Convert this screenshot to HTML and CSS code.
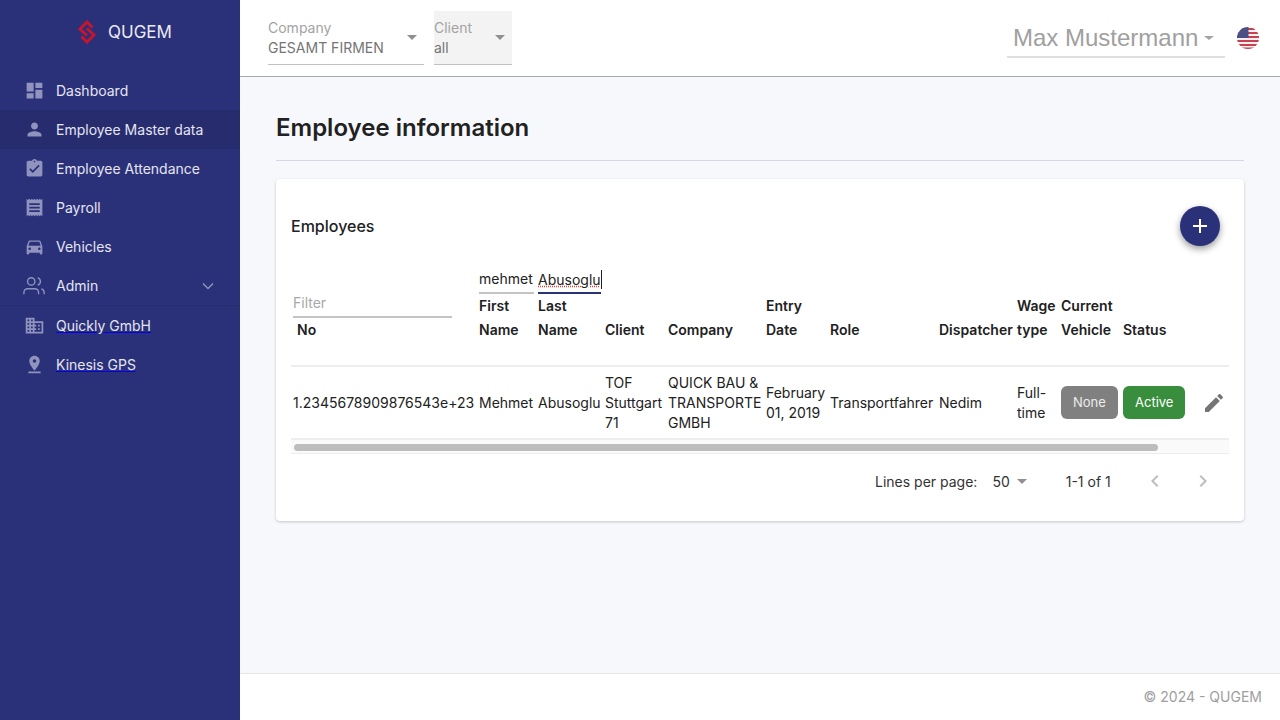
FILE: index.html
```html
<!DOCTYPE html>
<html>
<head lang="en">
    <meta charset="UTF-8">
    <title>Employee information</title>
    <link rel="stylesheet" href="styles.css">
</head>
<body>

<div class="app">
    <aside class="sidebar">
        <div class="brand">
            <svg class="brand-logo" viewBox="0 0 18 24" width="18" height="24">
                <path d="M14.5 7.5L9 2 2 9l7 6.5"/>
                <path d="M3.5 16.5L9 22l7-7-7-6.5"/>
            </svg>
            <span>QUGEM</span>
        </div>
        <nav class="nav">
            <div class="nav-item">
                <svg class="nav-icon" viewBox="0 0 24 24"><path d="M3 13h8V3H3v10zm0 8h8v-6H3v6zm10 0h8V11h-8v10zm0-18v6h8V3h-8z"/></svg>
                <span>Dashboard</span>
            </div>
            <div class="nav-item current">
                <svg class="nav-icon" viewBox="0 0 24 24"><path d="M12 12c2.21 0 4-1.79 4-4s-1.79-4-4-4-4 1.79-4 4 1.79 4 4 4zm0 2c-2.67 0-8 1.34-8 4v2h16v-2c0-2.66-5.33-4-8-4z"/></svg>
                <span>Employee Master data</span>
            </div>
            <div class="nav-item">
                <svg class="nav-icon" viewBox="0 0 24 24"><path d="M19 3h-4.18C14.4 1.84 13.3 1 12 1c-1.3 0-2.4.84-2.82 2H5c-1.1 0-2 .9-2 2v14c0 1.1.9 2 2 2h14c1.1 0 2-.9 2-2V5c0-1.1-.9-2-2-2zm-7 0c.55 0 1 .45 1 1s-.45 1-1 1-1-.45-1-1 .45-1 1-1zm-2 14l-4-4 1.41-1.41L10 14.17l6.59-6.59L18 9l-8 8z"/></svg>
                <span>Employee Attendance</span>
            </div>
            <div class="nav-item">
                <svg class="nav-icon" viewBox="0 0 24 24"><path d="M18 17H6v-2h12v2zm0-4H6v-2h12v2zm0-4H6V7h12v2zM3 22l1.5-1.5L6 22l1.5-1.5L9 22l1.5-1.5L12 22l1.5-1.5L15 22l1.5-1.5L18 22l1.5-1.5L21 22V2l-1.5 1.5L18 2l-1.5 1.5L15 2l-1.5 1.5L12 2l-1.5 1.5L9 2 7.5 3.5 6 2 4.5 3.5 3 2v20z"/></svg>
                <span>Payroll</span>
            </div>
            <div class="nav-item">
                <svg class="nav-icon" viewBox="0 0 24 24"><path d="M18.92 6.01C18.72 5.42 18.16 5 17.5 5h-11c-.66 0-1.21.42-1.42 1.01L3 12v8c0 .55.45 1 1 1h1c.55 0 1-.45 1-1v-1h12v1c0 .55.45 1 1 1h1c.55 0 1-.45 1-1v-8l-2.08-5.99zM6.5 16c-.83 0-1.5-.67-1.5-1.5S5.67 13 6.5 13s1.5.67 1.5 1.5S7.33 16 6.5 16zm11 0c-.83 0-1.5-.67-1.5-1.5s.67-1.5 1.5-1.5 1.5.67 1.5 1.5-.67 1.5-1.5 1.5zM5 11l1.5-4.5h11L19 11H5z"/></svg>
                <span>Vehicles</span>
            </div>
            <div class="nav-item admin">
                <svg class="nav-icon line" viewBox="0 0 24 24"><path d="M17 21v-2a4 4 0 0 0-4-4H5a4 4 0 0 0-4 4v2"/><circle cx="9" cy="7" r="4"/><path d="M23 21v-2a4 4 0 0 0-3-3.87"/><path d="M16 3.13a4 4 0 0 1 0 7.75"/></svg>
                <span>Admin</span>
                <svg class="nav-chevron" viewBox="0 0 12 8" width="12" height="8"><path d="M1 1.5l5 5 5-5"/></svg>
            </div>
            <a class="nav-item nav-link" href="#">
                <svg class="nav-icon" viewBox="0 0 24 24"><path d="M12 7V3H2v18h20V7H12zM6 19H4v-2h2v2zm0-4H4v-2h2v2zm0-4H4V9h2v2zm0-4H4V5h2v2zm4 12H8v-2h2v2zm0-4H8v-2h2v2zm0-4H8V9h2v2zm0-4H8V5h2v2zm10 12h-8v-2h2v-2h-2v-2h2v-2h-2V9h8v10zm-2-8h-2v2h2v-2zm0 4h-2v2h2v-2z"/></svg>
                <span>Quickly GmbH</span>
            </a>
            <a class="nav-item nav-link" href="#">
                <svg class="nav-icon" viewBox="0 0 24 24"><path d="M18 8c0-3.31-2.69-6-6-6S6 4.69 6 8c0 4.5 6 11 6 11s6-6.5 6-11zm-8 0c0-1.1.9-2 2-2s2 .9 2 2-.89 2-2 2c-1.1 0-2-.9-2-2zM5 20v2h14v-2H5z"/></svg>
                <span>Kinesis GPS</span>
            </a>
        </nav>
    </aside>

    <div class="main">
        <header class="topbar">
            <div class="select select-company">
                <div class="select-label">Company</div>
                <div class="select-value">GESAMT FIRMEN</div>
                <i class="caret"></i>
            </div>
            <div class="select select-client">
                <div class="select-label">Client</div>
                <div class="select-value">all</div>
                <i class="caret"></i>
            </div>
            <div class="user">
                <span>Max Mustermann</span>
                <i class="caret small"></i>
            </div>
            <svg class="flag" viewBox="0 0 22 22" width="22" height="22">
                <defs><clipPath id="round"><circle cx="11" cy="11" r="11"/></clipPath></defs>
                <g clip-path="url(#round)">
                    <rect width="22" height="22" fill="#f2f0f0"/>
                    <rect y="1" width="22" height="2" fill="#c9404f"/>
                    <rect y="5" width="22" height="2" fill="#c9404f"/>
                    <rect y="9" width="22" height="2" fill="#c9404f"/>
                    <rect y="13" width="22" height="2" fill="#c9404f"/>
                    <rect y="17" width="22" height="2" fill="#c9404f"/>
                    <rect y="20.5" width="22" height="2" fill="#c9404f"/>
                    <rect width="11.5" height="11" fill="#4a4f86"/>
                </g>
            </svg>
        </header>

        <main class="content">
            <h1 class="page-title">Employee information</h1>
            <section class="card">
                <div class="card-head">
                    <h2>Employees</h2>
                    <button class="fab" type="button">
                        <svg viewBox="0 0 24 24" width="24" height="24"><path d="M19 13h-6v6h-2v-6H5v-2h6V5h2v6h6v2z"/></svg>
                    </button>
                </div>
                <div class="table-wrap">
                    <table class="grid">
                        <colgroup>
                            <col class="c-no"><col class="c-first"><col class="c-last"><col class="c-client">
                            <col class="c-company"><col class="c-date"><col class="c-role"><col class="c-disp">
                            <col class="c-wage"><col class="c-vehicle"><col class="c-status"><col class="c-edit">
                        </colgroup>
                        <thead>
                            <tr>
                                <th class="no-head">
                                    <input class="filter" type="text" placeholder="Filter">
                                    <div class="no-title">No</div>
                                </th>
                                <th>
                                    <input class="filter short" type="text" value="mehmet">
                                    <div>First<br>Name</div>
                                </th>
                                <th>
                                    <div class="filter short focused"><span class="typed">Abusoglu</span></div>
                                    <div>Last<br>Name</div>
                                </th>
                                <th>Client</th>
                                <th>Company</th>
                                <th>Entry<br>Date</th>
                                <th>Role</th>
                                <th>Dispatcher</th>
                                <th>Wage<br>type</th>
                                <th>Current<br>Vehicle</th>
                                <th>Status</th>
                                <th></th>
                            </tr>
                        </thead>
                        <tbody>
                            <tr>
                                <td class="num">1.2345678909876543e+23</td>
                                <td>Mehmet</td>
                                <td>Abusoglu</td>
                                <td>TOF Stuttgart 71</td>
                                <td>QUICK BAU &amp; TRANSPORTE GMBH</td>
                                <td>February 01, 2019</td>
                                <td>Transportfahrer</td>
                                <td>Nedim</td>
                                <td>Full-time</td>
                                <td><span class="chip chip-grey">None</span></td>
                                <td><span class="chip chip-green">Active</span></td>
                                <td class="edit">
                                    <svg viewBox="0 0 24 24" width="24" height="24"><path d="M3 17.25V21h3.75L17.81 9.94l-3.75-3.75L3 17.25zM20.71 7.04c.39-.39.39-1.02 0-1.41l-2.34-2.34c-.39-.39-1.02-.39-1.41 0l-1.83 1.83 3.75 3.75 1.83-1.83z"/></svg>
                                </td>
                            </tr>
                        </tbody>
                    </table>
                    <div class="scrollbar"><div class="scroll-thumb"></div></div>
                </div>
                <div class="pager">
                    <span class="pager-label">Lines per page:</span>
                    <span class="pager-size">50</span>
                    <i class="caret"></i>
                    <span class="pager-range">1-1 of 1</span>
                    <svg class="pager-arrow prev" viewBox="0 0 24 24" width="24" height="24"><path d="M15.41 7.41L14 6l-6 6 6 6 1.41-1.41L10.83 12z"/></svg>
                    <svg class="pager-arrow" viewBox="0 0 24 24" width="24" height="24"><path d="M10 6L8.59 7.41 13.17 12l-4.58 4.59L10 18l6-6z"/></svg>
                </div>
            </section>
        </main>

        <footer class="footer">© 2024 - QUGEM</footer>
    </div>
</div>

</body>
</html>
```

FILE: styles.css
```css
* {
    box-sizing: border-box;
}
body {
    margin: 0;
    font-family: "Inter", "Noto Sans", sans-serif;
    font-size: 14px;
    color: #212121;
    background: #f7f8fc;
}
.app {
    display: flex;
    height: 720px;
    overflow: hidden;
}

/* sidebar */
.sidebar {
    width: 240px;
    flex: none;
    background: #2b3179;
    color: #e4e5f1;
}
.brand {
    display: flex;
    align-items: center;
    gap: 12px;
    height: 71px;
    padding: 0 0 7px 78px;
    font-size: 17px;
    color: #e9eaf4;
}
.brand-logo {
    fill: none;
    stroke: #c8152f;
    stroke-width: 3;
}
.nav-item {
    display: flex;
    align-items: center;
    height: 39px;
    padding-left: 22px;
    color: #e4e5f1;
}
.nav-item.current {
    background: #272c6e;
}
.nav-item.admin {
    height: 40px;
    border-bottom: 1px solid #272c6e;
}
.nav-icon {
    width: 21px;
    height: 21px;
    margin: 0 11.5px 0 1.5px;
    flex: none;
    fill: #8f93bd;
}
.nav-icon.line {
    width: 22px;
    height: 22px;
    margin: 0 11px 0 1px;
    fill: none;
    stroke: #8f93bd;
    stroke-width: 1.5;
}
.nav-chevron {
    margin-left: auto;
    margin-right: 26px;
    fill: none;
    stroke: #8f93bd;
    stroke-width: 1.5;
}
.nav-link span {
    text-decoration: underline;
    text-decoration-color: #0000ee;
}

/* top bar */
.main {
    flex: 1;
    min-width: 0;
    display: flex;
    flex-direction: column;
}
.topbar {
    display: flex;
    align-items: flex-start;
    height: 77px;
    flex: none;
    padding: 11px 21px 0 28px;
    background: #fff;
    border-bottom: 1px solid #a9a9a9;
}
.select {
    position: relative;
    height: 54px;
    padding-top: 7px;
    border-bottom: 1px solid #c2c2c2;
    line-height: 20px;
}
.select-company {
    width: 156px;
    margin-right: 10px;
}
.select-client {
    width: 78px;
    background: #f3f3f3;
}
.select-label {
    color: #a3a3a3;
}
.select-value {
    color: #757575;
}
.caret {
    display: inline-block;
    width: 0;
    height: 0;
    border-left: 5px solid transparent;
    border-right: 5px solid transparent;
    border-top: 5px solid #8f8f8f;
}
.select .caret {
    position: absolute;
    top: 24px;
    right: 7px;
}
.caret.small {
    border-width: 4px 5px 0;
    border-top-color: #a3a3a3;
}
.user {
    display: flex;
    align-items: center;
    gap: 6px;
    width: 218px;
    height: 47px;
    margin-left: auto;
    margin-right: 12px;
    padding: 8px 0 0 6px;
    border-bottom: 2px solid #e0e0e0;
    font-family: "Liberation Sans", Arial, sans-serif;
    font-size: 24px;
    color: #a0a0a0;
}
.flag {
    margin-top: 16px;
    flex: none;
}

/* content */
.content {
    flex: 1;
    padding: 0 36px;
}
.page-title {
    margin: 0 0 18px;
    height: 84px;
    padding-top: 35px;
    border-bottom: 1px solid #d5d7e2;
    font-size: 24px;
    line-height: 32px;
    font-weight: 600;
}
.card {
    height: 342px;
    padding: 0 15px;
    background: #fff;
    border-radius: 4px;
    box-shadow: 0 1px 3px rgba(0, 0, 0, .2);
}
.card-head {
    display: flex;
    align-items: center;
    justify-content: space-between;
    height: 94px;
    padding: 0 9px 0 0;
}
.card-head h2 {
    margin: 0;
    font-size: 16px;
    font-weight: 500;
}
.fab {
    width: 40px;
    height: 40px;
    padding: 8px;
    border: 0;
    border-radius: 50%;
    background: #2b3179;
    box-shadow: 0 3px 7px rgba(0, 0, 0, .4);
}
.fab svg {
    display: block;
    fill: #fff;
}

/* table */
.table-wrap {
    width: 938px;
    margin-top: -7px;
}
.grid {
    width: 938px;
    table-layout: fixed;
    border-collapse: collapse;
}
.c-no { width: 186px; }
.c-first { width: 59px; }
.c-last { width: 67px; }
.c-client { width: 63px; }
.c-company { width: 98px; }
.c-date { width: 64px; }
.c-role { width: 109px; }
.c-disp { width: 78px; }
.c-wage { width: 44px; }
.c-vehicle { width: 62px; }
.c-status { width: 71px; }
.c-edit { width: 37px; }
.grid th {
    height: 100px;
    padding: 0 2px 23px;
    text-align: left;
    vertical-align: bottom;
    font-weight: 600;
    line-height: 24px;
    border-bottom: 2px solid #eeeeee;
}
.filter {
    display: block;
    width: 100%;
    height: 25px;
    padding: 0 0 4px;
    border: 0;
    border-bottom: 2px solid #c4c4c4;
    outline: none;
    background: none;
    font: 400 14px/21px "Inter", sans-serif;
    color: #212121;
    margin-bottom: 0;
}
.filter::placeholder {
    color: #a8a8a8;
}
.no-head {
    padding-left: 2px;
}
.no-head .filter {
    width: 159px;
}
.no-title {
    padding-left: 4px;
}
.filter.focused {
    border-bottom-color: #2b3179;
}
.typed {
    display: inline-block;
    height: 19px;
    line-height: 19px;
    border-right: 1px solid #212121;
    text-decoration: underline dotted #e0433f;
}
.grid td {
    height: 73px;
    padding: 0 2px;
    line-height: 20px;
    border-bottom: 2px solid #eeeeee;
}
.grid td.num {
    white-space: nowrap;
}
.chip {
    display: inline-block;
    height: 33px;
    padding: 0 12px;
    border-radius: 6px;
    font-size: 13px;
    line-height: 33px;
    color: #fff;
}
.chip-grey {
    background: #808080;
    color: #ececec;
}
.chip-green {
    background: #388e3c;
}
.edit svg {
    display: block;
    margin-left: 8px;
    fill: #757575;
}
.scrollbar {
    height: 14px;
    padding: 4px 3px;
    background: #fafafa;
    border-bottom: 1px solid #eeeeee;
}
.scroll-thumb {
    width: 864px;
    height: 7px;
    border-radius: 4px;
    background: #bdbdbd;
}

/* pager */
.pager {
    display: flex;
    align-items: center;
    height: 54px;
    padding-left: 584px;
    white-space: nowrap;
    color: #333;
}
.pager-size {
    margin-left: 15px;
    margin-right: 7px;
}
.pager .caret {
    margin-right: 39px;
}
.pager-arrow {
    flex: none;
    margin-left: 24px;
    fill: #bdbdbd;
}
.pager-arrow.prev {
    margin-left: 32px;
}

/* footer */
.footer {
    flex: none;
    height: 47px;
    padding: 14px 18px 0 0;
    background: #fff;
    border-top: 1px solid #e6e6e6;
    text-align: right;
    color: #9e9e9e;
}
```
